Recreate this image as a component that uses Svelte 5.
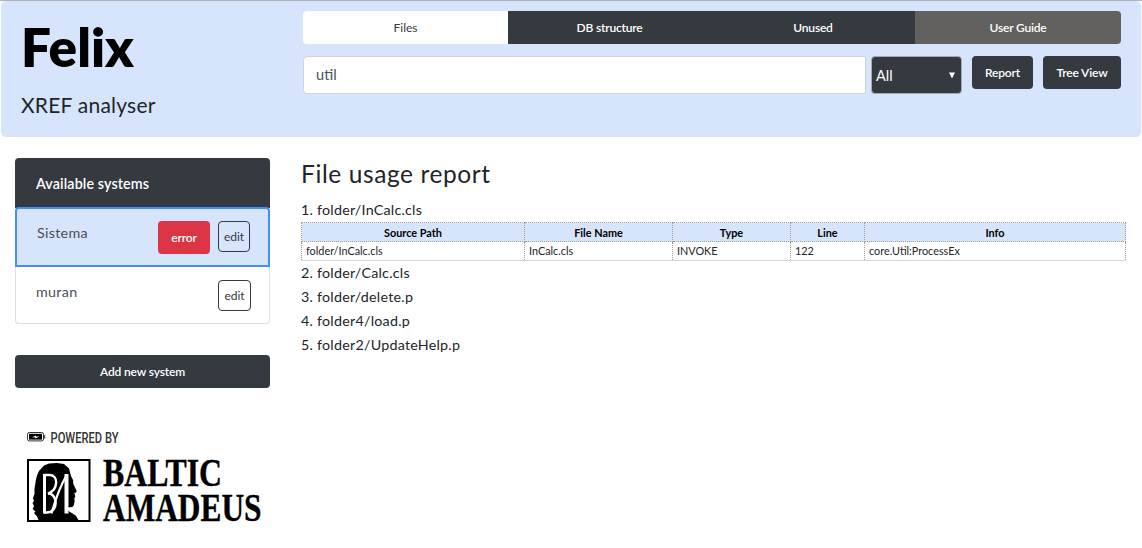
<script>
  const tabs = [
    { label: 'Files', kind: 'active' },
    { label: 'DB structure', kind: 'dark' },
    { label: 'Unused', kind: 'dark' },
    { label: 'User Guide', kind: 'guide' }
  ];
  const columns = ['Source Path', 'File Name', 'Type', 'Line', 'Info'];
  const usages = [['folder/InCalc.cls', 'InCalc.cls', 'INVOKE', '122', 'core.Util:ProcessEx']];
  const files = ['folder/InCalc.cls', 'folder/Calc.cls', 'folder/delete.p', 'folder4/load.p', 'folder2/UpdateHelp.p'];
  let query = $state('util');
</script>

<div class="page">
  <header>
    <div class="brand">
      <h1>Felix</h1>
      <p>XREF analyser</p>
    </div>
    <div class="tools">
      <nav>
        {#each tabs as tab}
          <button class="tab {tab.kind}"><span>{tab.label}</span></button>
        {/each}
      </nav>
      <div class="search">
        <input bind:value={query} />
        <div class="select"><span>All</span><svg width="6" height="7" viewBox="0 0 6 7"><path d="M0 .5h6L3 6.5z" fill="#fff" /></svg></div>
        <button class="btn report"><span>Report</span></button>
        <button class="btn tree"><span>Tree View</span></button>
      </div>
    </div>
  </header>

  <div class="body">
    <aside>
      <div class="systems">
        <div class="head"><span>Available systems</span></div>
        <div class="system selected">
          <span class="name">Sistema</span>
          <button class="btn error"><span>error</span></button>
          <button class="edit"><span>edit</span></button>
        </div>
        <div class="system last">
          <span class="name">muran</span>
          <button class="edit"><span>edit</span></button>
        </div>
      </div>
      <button class="btn add"><span>Add new system</span></button>
      <svg class="logo" width="240" height="106" viewBox="25 428 240 106">
        <rect x="27.5" y="432.5" width="16" height="8.4" rx="1.8" fill="#fff" stroke="#333" />
        <rect x="29" y="433.8" width="13" height="5.8" fill="#000" />
        <path d="M44.2 435h1v3.600h-1z" fill="#333" />
        <path d="M31.800 437.600l4-2 .5 1.200 3.400-.8-4.100 2.600-.6-1.300z" fill="#fff" />
        <text x="50.500" y="443" class="powered" textLength="68" lengthAdjust="spacingAndGlyphs">POWERED BY</text>
        <rect x="28" y="460" width="61.5" height="61" fill="#fff" stroke="#000" stroke-width="2" />
        <path d="M39 521L36.700 516 34 513l1.500-1.500L32.700 509 34 506l-1.500-3 1.500-2-1-3 1.500-4V489L35.700 481 37 475.500 39 471 44 465.500 49 463.500 57 463 64 464 69 468.500 71 476 73 480 73.300 484 76.700 491 76 492.500 74.300 493 75.300 496.500 74.300 498.500 74.600 501 74 505 72.500 507 67.500 507.500 68.500 511 75.700 515.500 79 521z" fill="#000" />
        <g fill="none" stroke="#fff">
          <path d="M44.500 474v39.500" stroke-width="3" />
          <path d="M44 475h6c8.500 0 8.500 15-2 18.500 10 0 11 19-1.500 19h-2.500" stroke-width="2.400" />
          <path d="M51.500 513.500c3-11 8-26 15.500-39" stroke-width="2.200" />
          <path d="M66.500 474v39.500" stroke-width="4" />
        </g>
        <text x="103" y="485.800" class="word" textLength="119" lengthAdjust="spacingAndGlyphs">BALTIC</text>
        <text x="103" y="520.600" class="word" textLength="158.500" lengthAdjust="spacingAndGlyphs">AMADEUS</text>
      </svg>
    </aside>

    <main>
      <h2>File usage report</h2>
      {#each files as file, i}
        <div class="file">{i + 1}. {file}</div>
        {#if i === 0}
          <table>
            <colgroup><col class="c1" /><col class="c2" /><col class="c3" /><col class="c4" /><col class="c5" /></colgroup>
            <thead><tr>{#each columns as c}<th>{c}</th>{/each}</tr></thead>
            <tbody>
              {#each usages as row}<tr>{#each row as cell}<td>{cell}</td>{/each}</tr>{/each}
            </tbody>
          </table>
        {/if}
      {/each}
    </main>
  </div>
</div>

<style>
  :global(body) { margin: 0; background: #fff; }
  * { box-sizing: border-box; }
  .page { width: 1142px; height: 548px; overflow: hidden; border-top: 1px solid #b3b1b9; font-family: Lato, sans-serif; font-size: 14.3px; color: #212529; }
  header { display: flex; height: 136px; margin: 0 1px; background: #d7e5fc; border-radius: 5px; }
  .brand { width: 302px; padding-left: 20px; }
  h1 { margin: 14px 0 0; font-size: 53px; line-height: 64px; font-weight: 800; letter-spacing: 0; color: #000; }
  p { margin: 11px 0 0; font-size: 21px; line-height: 30px; letter-spacing: .22px; }
  .tools { width: 818px; padding-top: 10px; }
  button { margin: 0; padding: 0; border: 0; font-family: inherit; font-size: 12px; display: flex; align-items: center; justify-content: center; }
  nav { display: grid; grid-template-columns: 205px 203px 204px 206px; height: 33px; border-radius: 4px; overflow: hidden; }
  .tab { color: #fff; background: #343a40; font-weight: 600; letter-spacing: -.2px; }
  .tab.active { background: #fff; color: #343a40; font-weight: 400; letter-spacing: 0; }
  .tab.guide { background: #636060; }
  .search { display: flex; margin-top: 12px; align-items: flex-start; }
  input { width: 563px; height: 38px; padding: 0 12px 2px; border: 1px solid #ced4da; border-radius: 4px 0 0 4px; font-family: inherit; font-size: 14.6px; color: #495057; background: #fff; outline: 0; }
  .select { display: flex; align-items: center; justify-content: space-between; width: 91px; height: 38px; margin-left: 5px; padding: 0 6px 0 4px; border: 1px solid #a9a9a9; border-radius: 4px; background: #343a40; color: #fff; font-size: 14.5px; }
  .btn { height: 33px; border-radius: 4px; background: #343a40; color: #fff; font-weight: 600; letter-spacing: -.15px; }
  .report { width: 61px; margin-left: 10px; }
  .tree { width: 78px; margin-left: 10px; }
  .body { display: flex; padding: 21px 16px 0 15px; }
  aside { width: 255px; }
  .systems { height: 166px; }
  .head { height: 50px; padding: 0 21px; border-radius: 4px 4px 0 0; background: #343a40; color: #fff; font-weight: 600; letter-spacing: .12px; display: flex; align-items: center; }
  .system { display: flex; align-items: flex-start; padding: 13px 18px 0 20px; color: #495057; }
  .name { flex: 1; line-height: 24px; letter-spacing: .3px; }
  .system.selected { height: 60px; margin-top: -1px; padding: 12px 18px 0 20px; border: 2px solid #4390f4; border-radius: 4px 4px 0 0; background: #d7e5fc; }
  .system.last { height: 57px; border: 1px solid #dfdfdf; border-top: 0; border-radius: 0 0 4px 4px; }
  .edit { width: 33px; height: 31px; margin-left: 8px; border: 1px solid #343a40; border-radius: 4px; background: transparent; color: #343a40; }
  .selected .edit { width: 32px; }
  .error { width: 52px; background: #dc3545; }
  .add { width: 255px; margin-top: 31px; }
  .logo { display: block; margin: 40px 0 0 10px; overflow: visible; }
  .powered { font: 500 15px Roboto, sans-serif; fill: #333; }
  .word { font: 700 39.5px "Liberation Serif", serif; fill: #000; stroke: #000; stroke-width: .4px; }
  main { width: 825px; margin-left: 31px; }
  h2 { margin: 0 0 9px; font-size: 24.500px; line-height: 31px; font-weight: 400; letter-spacing: .6px; }
  .file { height: 24px; line-height: 24px; white-space: pre; letter-spacing: .23px; }
  table { width: 824px; height: 39px; border-collapse: collapse; table-layout: fixed; color: #212529; font-size: 10.850px; }
  .c1 { width: 223px; } .c2 { width: 148px; } .c3 { width: 118px; } .c4 { width: 74px; } .c5 { width: 261px; }
  th, td { height: 19px; border: 1px dotted #a0a0a0; line-height: 17px; }
  th { padding: 0 5px; background: #d7e5fc; color: #000; font-weight: 700; text-align: center; }
  td { padding: 0 4px 1px; line-height: 16px; text-align: left; }
  tbody td { border-bottom: 1px solid #d8d8d8; }
</style>
